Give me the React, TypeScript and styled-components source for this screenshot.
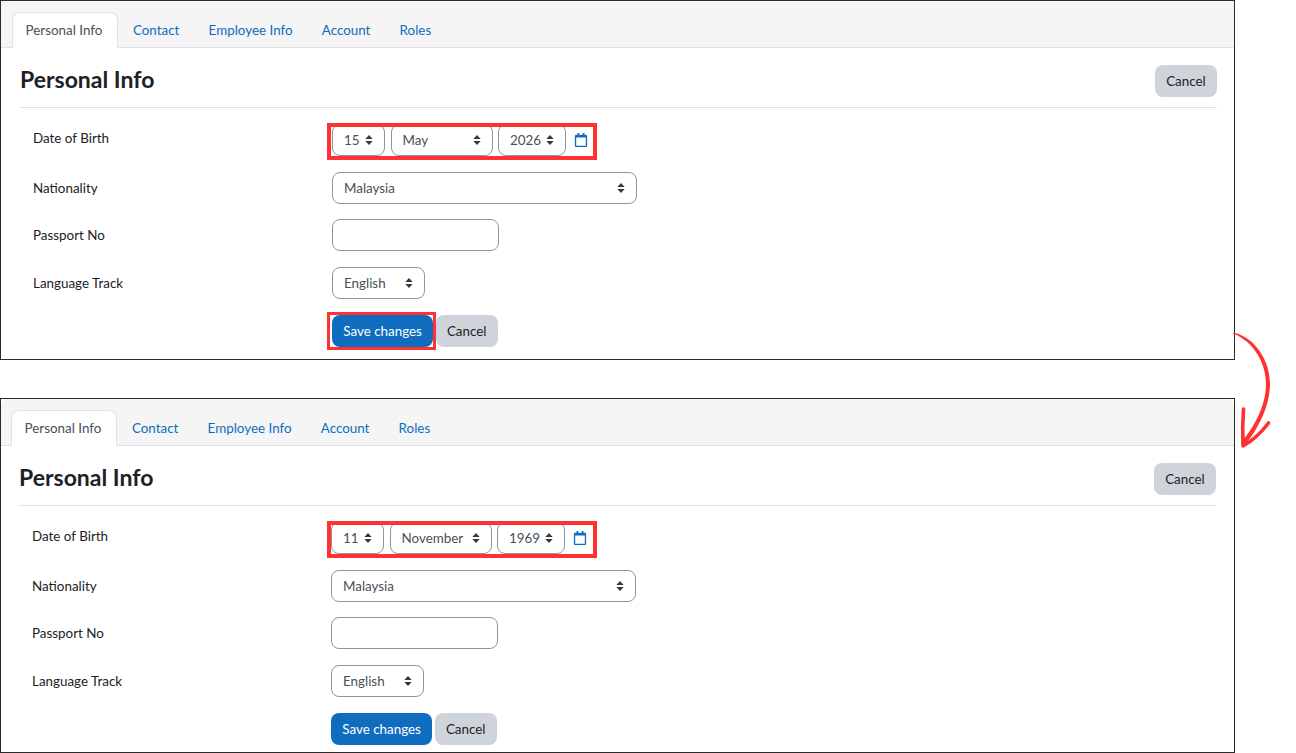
import styled, { createGlobalStyle } from "styled-components";
import { FaRegCalendar } from "react-icons/fa";

const caret =
  "data:image/svg+xml;utf8," +
  encodeURIComponent(
    '<svg xmlns="http://www.w3.org/2000/svg" width="8" height="10" viewBox="0 0 8 10"><path fill="#343a40" d="M4 0 L7.7 4 H.3 Z M4 10 L.3 6 H7.7 Z"/></svg>'
  );

const GlobalStyle = createGlobalStyle`
  html, body {
    margin: 0;
    padding: 0;
    background: #fff;
    overflow: hidden;
  }
  body {
    font-family: Lato, "Liberation Sans", sans-serif;
    font-size: 13.4px;
    color: #1d2125;
  }
`;

const Page = styled.div`
  position: relative;
  width: 1296px;
  height: 753px;
`;

const Panel = styled.section<{ $height: number }>`
  position: relative;
  box-sizing: border-box;
  width: 1235px;
  height: ${(p) => p.$height}px;
  border: 1px solid #2b2b2b;
  overflow: hidden;
  background: #fff;

  & + & {
    margin-top: 38px;
  }
`;

const TabBar = styled.nav<{ $shift: number }>`
  box-sizing: border-box;
  display: flex;
  height: 47px;
  padding: 11px 0 0 ${(p) => 10.5 + p.$shift}px;
  background: #f5f5f5;
  border-bottom: 1px solid #dee2e6;
  border-radius: ${(p) => (p.$shift ? "8px 8px 0 0" : "0")};
`;

const Tab = styled.a<{ $active?: boolean }>`
  box-sizing: border-box;
  height: 36px;
  padding: ${(p) => (p.$active ? "0 15px 0 13.1px" : "0 13.6px")};
  line-height: 34px;
  border: 1px solid ${(p) => (p.$active ? "#dee2e6" : "transparent")};
  border-bottom: 0;
  border-radius: 8px 8px 0 0;
  background: ${(p) => (p.$active ? "#fff" : "transparent")};
  color: ${(p) => (p.$active ? "#495057" : "#0f6cbf")};
  white-space: nowrap;
`;

const Content = styled.div<{ $shift: number }>`
  padding: 0 ${(p) => 17 - p.$shift}px 0 ${(p) => 19 + p.$shift}px;
`;

const Header = styled.header`
  box-sizing: border-box;
  display: flex;
  align-items: center;
  justify-content: space-between;
  height: 60px;
  padding-top: 7px;
  border-bottom: 1px solid #dee2e6;
`;

const Title = styled.h2`
  margin: 0 0 4px;
  font-size: 23px;
  font-weight: 700;
  line-height: 30px;
  color: #1d2125;
`;

const Form = styled.form`
  display: flex;
  flex-direction: column;
  gap: 15.5px;
  padding: 16px 0 0 13px;
`;

const Row = styled.div<{ $top?: boolean }>`
  display: flex;
  align-items: ${(p) => (p.$top ? "flex-start" : "center")};
  min-height: 32px;
`;

const Label = styled.label<{ $top?: boolean }>`
  width: 299px;
  flex: none;
  line-height: 20px;
  padding-top: ${(p) => (p.$top ? "4px" : "0")};
`;

const Controls = styled.div`
  display: flex;
  align-items: center;
  gap: 5.5px;
`;

const Select = styled.select<{ $width: number }>`
  box-sizing: border-box;
  appearance: none;
  width: ${(p) => p.$width}px;
  height: 32px;
  padding: 0 20px 0 11px;
  border: 1px solid #8f959e;
  border-radius: 8px;
  background: #fff url("${caret}") no-repeat right 11px center;
  color: #495057;
  font: inherit;
`;

const TextInput = styled.input`
  box-sizing: border-box;
  width: 167px;
  height: 32px;
  padding: 0 11px;
  border: 1px solid #8f959e;
  border-radius: 8px;
  background: #fff;
  font: inherit;
`;

const CalendarLink = styled.a`
  display: flex;
  margin-left: 2px;
  color: #0f6cbf;
  font-size: 14px;
`;

const Button = styled.button<{ $primary?: boolean }>`
  box-sizing: border-box;
  height: 32px;
  padding: 0 11.25px;
  border: 0;
  border-radius: 8px;
  background: ${(p) => (p.$primary ? "#0f6cbf" : "#ced4da")};
  color: ${(p) => (p.$primary ? "#fff" : "#1d2125")};
  font: inherit;
`;

const Buttons = styled.div`
  display: flex;
  gap: 2.5px;
  margin: 1px 0 0 299px;
`;

const Highlight = styled.div<{ $x: number; $y: number; $w: number; $h: number; $line: number }>`
  position: absolute;
  box-sizing: border-box;
  left: ${(p) => p.$x}px;
  top: ${(p) => p.$y}px;
  width: ${(p) => p.$w}px;
  height: ${(p) => p.$h}px;
  border: ${(p) => p.$line}px solid #ff3131;
  pointer-events: none;
`;

const Arrow = styled.svg`
  position: absolute;
  left: 1225px;
  top: 325px;
`;

type DateValue = { day: string; month: string; year: string };

const tabs = ["Personal Info", "Contact", "Employee Info", "Account", "Roles"];

const InfoPanel = ({
  height,
  shift,
  date,
  marks,
}: {
  height: number;
  shift: number;
  date: DateValue;
  marks?: boolean;
}) => (
  <Panel $height={height}>
    <TabBar $shift={shift}>
      {tabs.map((t, i) => (
        <Tab key={t} $active={i === 0}>
          {t}
        </Tab>
      ))}
    </TabBar>
    <Content $shift={shift}>
      <Header>
        <Title>Personal Info</Title>
        <Button type="button">Cancel</Button>
      </Header>
      <Form>
        <Row $top>
          <Label $top>Date of Birth</Label>
          <Controls>
            <Select $width={53} value={date.day} onChange={() => {}}>
              <option>{date.day}</option>
            </Select>
            <Select $width={102} value={date.month} onChange={() => {}}>
              <option>{date.month}</option>
            </Select>
            <Select $width={68} value={date.year} onChange={() => {}}>
              <option>{date.year}</option>
            </Select>
            <CalendarLink>
              <FaRegCalendar />
            </CalendarLink>
          </Controls>
        </Row>
        <Row>
          <Label>Nationality</Label>
          <Select $width={305} value="Malaysia" onChange={() => {}}>
            <option>Malaysia</option>
          </Select>
        </Row>
        <Row>
          <Label>Passport No</Label>
          <TextInput type="text" />
        </Row>
        <Row>
          <Label>Language Track</Label>
          <Select $width={93} value="English" onChange={() => {}}>
            <option>English</option>
          </Select>
        </Row>
        <Buttons>
          <Button type="button" $primary>
            Save changes
          </Button>
          <Button type="button">Cancel</Button>
        </Buttons>
      </Form>
    </Content>
    {marks && <Highlight $x={326} $y={311} $w={109} $h={38} $line={3} />}
  </Panel>
);

const App = () => {
  return (
    <Page>
      <GlobalStyle />
      <InfoPanel
        height={360}
        shift={0}
        date={{ day: "15", month: "May", year: "2026" }}
        marks
      />
      <InfoPanel
        height={355}
        shift={-1}
        date={{ day: "11", month: "November", year: "1969" }}
      />
      <Highlight $x={327} $y={123} $w={270} $h={37} $line={4} />
      <Highlight $x={327} $y={521} $w={270} $h={37} $line={4} />
      <Arrow width="60" height="130" viewBox="0 0 60 130" fill="none">
        <path
          d="M8 7.5 C 30 12, 45.5 36, 45 60 C 44.5 82, 33 104, 20 120 L 16 118 C 29 102, 40.5 82, 41 60 C 41.5 38, 28 16, 8 8.5 Z"
          fill="#ff3131"
        />
        <path
          d="M18.5 84 C 17.5 97, 17.5 110, 18 121 C 27 116, 36 108, 43.5 98"
          stroke="#ff3131"
          strokeWidth="3.6"
          strokeLinecap="round"
          strokeLinejoin="round"
        />
      </Arrow>
    </Page>
  );
};

export default App;
